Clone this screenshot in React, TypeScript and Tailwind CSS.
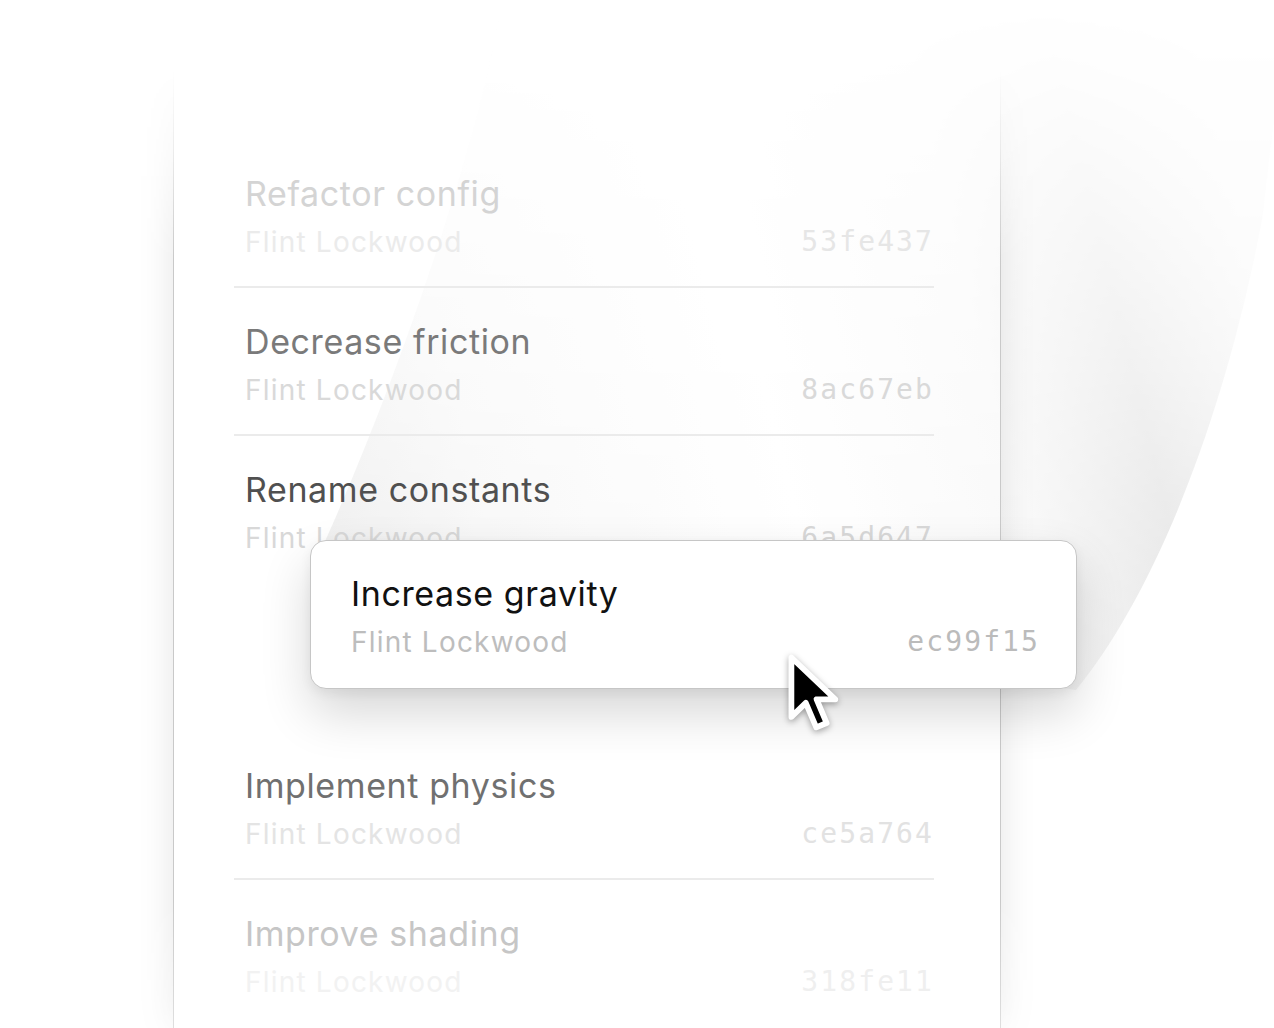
import React from "react";

type Row = {
  title: string;
  hash: string;
  titleColor: string;
  subColor: string;
  hashColor: string;
  divider: boolean;
  empty?: boolean;
};

const rows: Row[] = [
  { title: "Refactor config", hash: "53fe437", titleColor: "text-[#d4d4d4]", subColor: "text-[#ebebeb]", hashColor: "text-[#e6e6e6]", divider: true },
  { title: "Decrease friction", hash: "8ac67eb", titleColor: "text-[#7a7a7a]", subColor: "text-[#d9d9d9]", hashColor: "text-[#d9d9d9]", divider: true },
  { title: "Rename constants", hash: "6a5d647", titleColor: "text-[#505050]", subColor: "text-[#d8d8d8]", hashColor: "text-[#d8d8d8]", divider: false },
  { title: "", hash: "", titleColor: "", subColor: "", hashColor: "", divider: false, empty: true },
  { title: "Implement physics", hash: "ce5a764", titleColor: "text-[#707070]", subColor: "text-[#e4e4e4]", hashColor: "text-[#e2e2e2]", divider: true },
  { title: "Improve shading", hash: "318fe11", titleColor: "text-[#c6c6c6]", subColor: "text-[#f2f2f2]", hashColor: "text-[#efefef]", divider: false },
];

const sans = "font-['Inter','Liberation_Sans',sans-serif]";
const mono = "font-['DejaVu_Sans_Mono','Liberation_Mono',monospace]";

function ListRow({ r }: { r: Row }) {
  if (r.empty) return <div className="h-[148px]" />;
  return (
    <div className="relative h-[148px] pl-[72px] pr-[67px] pt-[34px]">
      <div className={`${sans} text-[34px] leading-[40px] tracking-[0.6px] ${r.titleColor}`}>{r.title}</div>
      <div className="mt-[8px] flex items-center justify-between">
        <span className={`${sans} text-[28px] leading-[40px] tracking-[1.2px] ${r.subColor}`}>Flint Lockwood</span>
        <span className={`${mono} text-[28px] leading-[40px] tracking-[2.1px] ${r.hashColor}`}>{r.hash}</span>
      </div>
      {r.divider && <div className="absolute bottom-0 left-[61px] right-[67px] h-[2px] bg-[#ebebeb]" />}
    </div>
  );
}

function Curl() {
  return (
    <svg className="pointer-events-none absolute inset-0" width="1274" height="1028" viewBox="0 0 1274 1028">
      <defs>
        <linearGradient id="shade" gradientUnits="userSpaceOnUse" x1="300" y1="600" x2="1274" y2="360">
          <stop offset="0" stopColor="#e8e8e8" />
          <stop offset="0.2" stopColor="#f6f6f6" />
          <stop offset="0.5" stopColor="#ffffff" />
          <stop offset="0.72" stopColor="#f7f7f7" />
          <stop offset="0.86" stopColor="#e3e3e3" />
          <stop offset="1" stopColor="#f6f6f6" />
        </linearGradient>
        <linearGradient id="fade" gradientUnits="userSpaceOnUse" x1="0" y1="0" x2="0" y2="700">
          <stop offset="0" stopColor="#000" />
          <stop offset="0.1" stopColor="#111" />
          <stop offset="0.5" stopColor="#777" />
          <stop offset="1" stopColor="#fff" />
        </linearGradient>
        <mask id="m">
          <rect x="0" y="0" width="1274" height="1028" fill="url(#fade)" />
        </mask>
      </defs>
      <path
        d="M497 25 C478 140 400 380 312 570 L1076 690 C1150 600 1222 430 1262 220 L1274 120 L1274 0 L505 0 Z"
        fill="url(#shade)"
        mask="url(#m)"
      />
    </svg>
  );
}

function Cursor() {
  return (
    <svg
      className="pointer-events-none absolute left-[786px] top-[652px] drop-shadow-[0_2px_3px_rgba(0,0,0,0.35)]"
      width="54"
      height="83"
      viewBox="0 0 15 23"
    >
      <path
        transform="translate(1.5 1.5)"
        d="M0 0 L0 16.5 L4 12.6 L6.9 19.4 L9.8 18.2 L7 11.6 L12.2 11.6 Z"
        fill="#000"
        stroke="#fff"
        strokeWidth="1.6"
        strokeLinejoin="round"
      />
    </svg>
  );
}

export default function App() {
  return (
    <div className="relative h-[1028px] w-[1274px] overflow-hidden bg-white">
      <Curl />
      <div className="relative flex h-full pl-[113px]">
        <div className="flex h-full px-[60px] [mask-image:linear-gradient(to_bottom,transparent_0px,transparent_70px,rgba(0,0,0,0.35)_150px,black_260px,black_900px,rgba(0,0,0,0.6)_1028px)]">
          <div className="w-[828px] border-x border-[#c9c9c9] shadow-[0_0_34px_rgba(0,0,0,0.11)]" />
        </div>
      </div>
      <div className="absolute left-[173px] top-[140px] w-[828px]">
        {rows.map((r, i) => (
          <ListRow key={i} r={r} />
        ))}
      </div>
      <div className="absolute left-[310px] top-[540px] h-[149px] w-[767px] rounded-[16px] border border-[#c6c6c6] bg-white pl-[40px] pr-[36px] pt-[33px] shadow-[0_24px_50px_rgba(0,0,0,0.16),0_4px_12px_rgba(0,0,0,0.06)]">
        <div className={`${sans} text-[34px] leading-[40px] tracking-[0.6px] text-[#111111]`}>Increase gravity</div>
        <div className="mt-[8px] flex items-center justify-between">
          <span className={`${sans} text-[28px] leading-[40px] tracking-[1.2px] text-[#bdbdbd]`}>Flint Lockwood</span>
          <span className={`${mono} text-[28px] leading-[40px] tracking-[2.1px] text-[#bbbbbb]`}>ec99f15</span>
        </div>
      </div>
      <Cursor />
    </div>
  );
}
